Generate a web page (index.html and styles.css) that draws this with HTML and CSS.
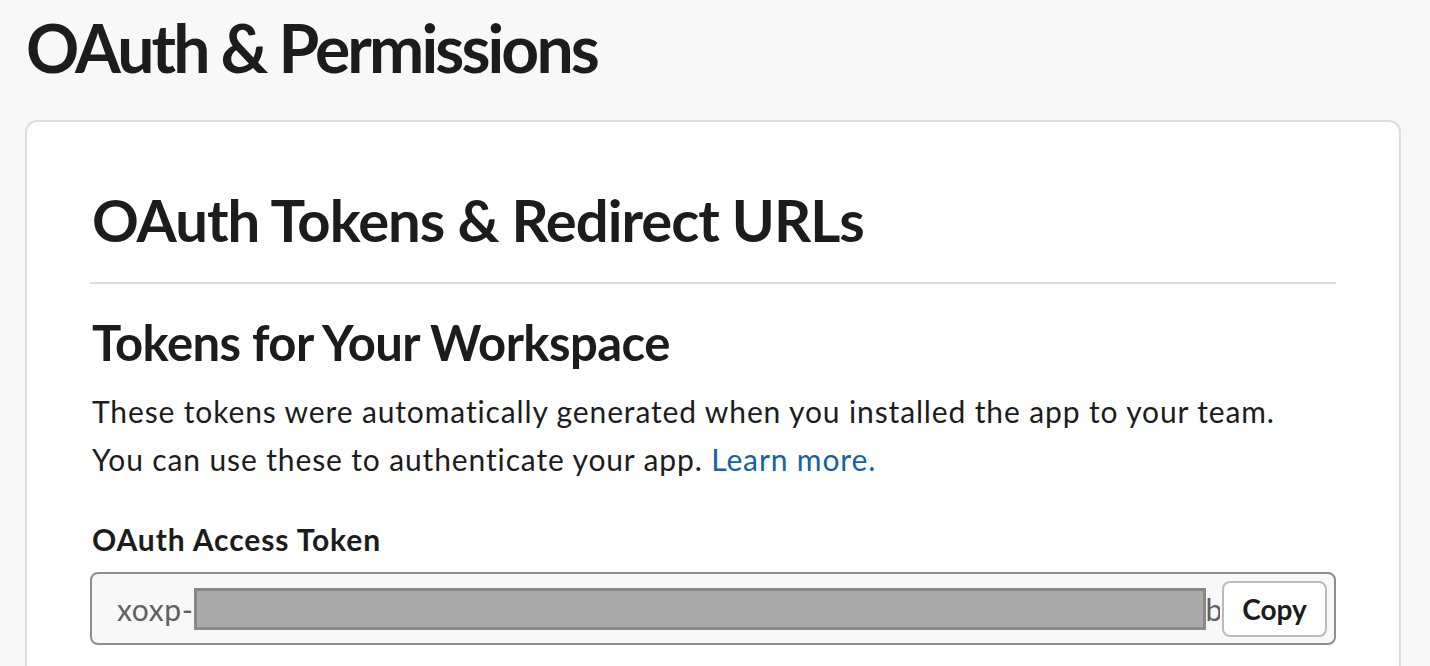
FILE: index.html
```html
<!DOCTYPE html>
<html>
<head>
<meta charset="utf-8">
<link rel="stylesheet" href="styles.css">
</head>
<body>
<div class="page">
  <h1 class="page-title">OAuth &amp; Permissions</h1>
  <section class="card">
    <h2 class="card-title">OAuth Tokens &amp; Redirect URLs</h2>
    <hr class="divider">
    <h3 class="section-title">Tokens for Your Workspace</h3>
    <p class="desc">These tokens were automatically generated when you installed the app to your team.<br>You can use these to authenticate your app. <a class="link" href="#">Learn more.</a></p>
    <div class="field-label">OAuth Access Token</div>
    <div class="token-input">
      <div class="token-text">xoxp-<span class="redact"></span>b</div>
      <button class="copy-btn">Copy</button>
    </div>
  </section>
</div>
</body>
</html>
```
FILE: styles.css
```css
html, body {
  margin: 0;
  padding: 0;
  background: #f8f8f8;
}
body {
  font-family: Lato, "Noto Sans", sans-serif;
  color: #1d1c1d;
}
.page {
  padding: 8px 29px 0 25px;
}
.page-title {
  margin: 0 0 33px 1px;
  font-size: 66px;
  line-height: 79px;
  font-weight: 700;
  letter-spacing: -2.9px;
}
.card {
  background: #fff;
  border: 2px solid #dddddd;
  border-radius: 12px;
  padding: 63px 63px 40px 63px;
}
.card-title {
  margin: 0 0 27px 2px;
  font-size: 58px;
  line-height: 70px;
  font-weight: 700;
  letter-spacing: -1px;
}
.divider {
  border: 0;
  height: 2px;
  background: #dddddd;
  margin: 0 0 29px 0;
}
.section-title {
  margin: 0 0 15px 2px;
  font-size: 49px;
  line-height: 59px;
  font-weight: 700;
  letter-spacing: -0.55px;
}
.desc {
  margin: 0 0 38px 2px;
  font-size: 30px;
  line-height: 48px;
  letter-spacing: 0.87px;
}
.link {
  color: #1264a3;
  text-decoration: none;
}
.field-label {
  margin: 0 0 15px 2px;
  font-size: 30px;
  line-height: 36px;
  font-weight: 700;
  letter-spacing: 0.9px;
}
.token-input {
  display: flex;
  align-items: center;
  height: 73px;
  box-sizing: border-box;
  border: 2px solid #8d8d8d;
  border-radius: 8px;
  background: #f8f8f8;
  padding: 0 7px 0 25px;
}
.token-text {
  flex: 1;
  min-width: 0;
  overflow: hidden;
  white-space: nowrap;
  font-size: 30px;
  letter-spacing: 0.6px;
  color: #616061;
  display: flex;
  align-items: center;
}
.redact {
  display: inline-block;
  flex: none;
  width: 1012px;
  height: 42px;
  box-sizing: border-box;
  background: #aaaaaa;
  border: 3px solid #888888;
}
.copy-btn {
  flex: none;
  width: 105px;
  height: 56px;
  box-sizing: border-box;
  background: #fff;
  border: 2px solid #bbbbbb;
  border-radius: 8px;
  font-family: Lato, "Noto Sans", sans-serif;
  font-size: 28px;
  font-weight: 700;
  color: #1d1c1d;
  padding: 0;
  margin-left: 2px;
}
```
